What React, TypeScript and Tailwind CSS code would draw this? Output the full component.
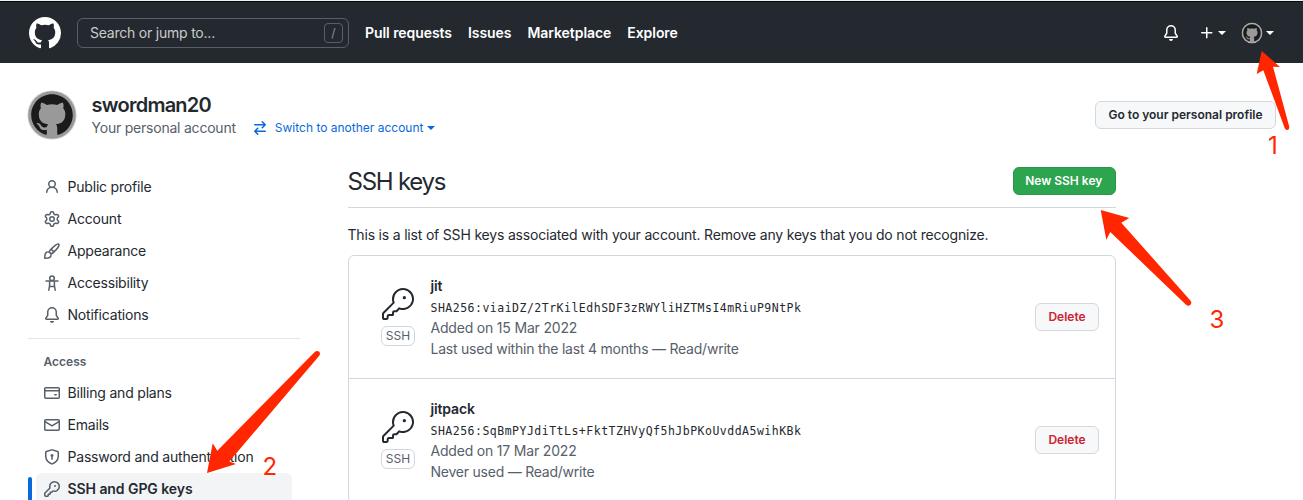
import type { ReactNode } from "react";

const MARK =
  "M8 0C3.58 0 0 3.58 0 8c0 3.54 2.29 6.53 5.47 7.59.4.07.55-.17.55-.38 0-.19-.01-.82-.01-1.49-2.01.37-2.53-.49-2.69-.94-.09-.23-.48-.94-.82-1.13-.28-.15-.68-.52-.01-.53.63-.01 1.08.58 1.23.82.72 1.21 1.87.87 2.33.66.07-.52.28-.87.51-1.07-1.78-.2-3.64-.89-3.64-3.95 0-.87.31-1.59.82-2.15-.08-.2-.36-1.02.08-2.12 0 0 .67-.21 2.2.82.64-.18 1.32-.27 2-.27.68 0 1.36.09 2 .27 1.53-1.04 2.2-.82 2.2-.82.44 1.1.16 1.92.08 2.12.51.56.82 1.27.82 2.15 0 3.07-1.87 3.75-3.65 3.95.29.25.54.73.54 1.48 0 1.07-.01 1.93-.01 2.2 0 .21.15.46.55.38A8.013 8.013 0 0016 8c0-4.42-3.58-8-8-8z";
const PERSON =
  "M10.5 5a2.5 2.5 0 11-5 0 2.5 2.5 0 015 0zm.061 3.073a4 4 0 10-5.123 0 6.004 6.004 0 00-3.431 5.142.75.75 0 001.498.07 4.5 4.5 0 018.99 0 .75.75 0 101.498-.07 6.005 6.005 0 00-3.432-5.142z";
const GEAR =
  "M7.429 1.525a6.593 6.593 0 011.142 0c.036.003.108.036.137.146l.289 1.105c.147.56.55.967.997 1.189.174.086.341.183.501.29.417.278.97.423 1.53.27l1.102-.303c.11-.03.175.016.195.046.219.31.41.641.573.989.014.031.022.11-.059.19l-.815.806c-.411.406-.562.957-.53 1.456a4.588 4.588 0 010 .582c-.032.499.119 1.05.53 1.456l.815.806c.08.08.073.159.059.19a6.494 6.494 0 01-.573.99c-.02.029-.086.074-.195.045l-1.103-.303c-.559-.153-1.112-.008-1.529.27-.16.107-.327.204-.5.29-.449.222-.851.628-.998 1.189l-.289 1.105c-.029.11-.101.143-.137.146a6.613 6.613 0 01-1.142 0c-.036-.003-.108-.037-.137-.146l-.289-1.105c-.147-.56-.55-.967-.997-1.189a4.502 4.502 0 01-.501-.29c-.417-.278-.97-.423-1.53-.27l-1.102.303c-.11.03-.175-.016-.195-.046a6.492 6.492 0 01-.573-.989c-.014-.031-.022-.11.059-.19l.815-.806c.411-.406.562-.957.53-1.456a4.587 4.587 0 010-.582c.032-.499-.119-1.05-.53-1.456l-.815-.806c-.08-.08-.073-.159-.059-.19a6.44 6.44 0 01.573-.99c.02-.029.086-.075.195-.045l1.103.303c.559.153 1.112.008 1.529-.27.16-.107.327-.204.5-.29.449-.222.851-.628.998-1.189l.289-1.105c.029-.11.101-.143.137-.146zM8 0c-.236 0-.47.01-.701.03-.743.065-1.29.615-1.458 1.261l-.29 1.106c-.017.066-.078.158-.211.224a5.994 5.994 0 00-.668.386c-.123.082-.233.09-.3.071L3.27 2.776c-.644-.177-1.392.02-1.82.63a7.977 7.977 0 00-.704 1.217c-.315.675-.111 1.422.363 1.891l.815.806c.05.048.098.147.088.294a6.084 6.084 0 000 .772c.01.147-.038.246-.088.294l-.815.806c-.474.469-.678 1.216-.363 1.891.2.428.436.835.704 1.218.428.609 1.176.806 1.82.63l1.103-.303c.066-.019.176-.011.299.071.213.143.436.272.668.386.133.066.194.158.212.224l.289 1.106c.169.646.715 1.196 1.458 1.26a8.094 8.094 0 001.402 0c.743-.064 1.29-.614 1.458-1.26l.29-1.106c.017-.066.078-.158.211-.224a5.98 5.98 0 00.668-.386c.123-.082.233-.09.3-.071l1.102.302c.644.177 1.392-.02 1.82-.63.268-.382.505-.789.704-1.217.315-.675.111-1.422-.364-1.891l-.814-.806c-.05-.048-.098-.147-.088-.294a6.1 6.1 0 000-.772c-.01-.147.039-.246.088-.294l.814-.806c.475-.469.679-1.216.364-1.891a7.992 7.992 0 00-.704-1.218c-.428-.609-1.176-.806-1.82-.63l-1.103.303c-.066.019-.176.011-.299-.071a5.991 5.991 0 00-.668-.386c-.133-.066-.194-.158-.212-.224L10.16 1.29C9.99.645 9.444.095 8.701.031A8.094 8.094 0 008 0zm1.5 8a1.5 1.5 0 11-3 0 1.5 1.5 0 013 0zM11 8a3 3 0 11-6 0 3 3 0 016 0z";
const BRUSH =
  "M11.134 1.535C9.722 2.562 8.16 4.057 6.889 5.312 5.8 6.387 5.041 7.401 4.575 8.294a3.745 3.745 0 00-3.227 1.054c-.43.431-.69 1.066-.86 1.657a11.982 11.982 0 00-.358 1.914A21.263 21.263 0 000 15.203v.054l.75-.007-.007.75h.054a14.404 14.404 0 00.654-.012 21.243 21.243 0 001.63-.118c.62-.07 1.3-.18 1.914-.357.592-.17 1.226-.43 1.657-.861a3.745 3.745 0 001.055-3.217c.908-.461 1.942-1.216 3.04-2.3 1.279-1.262 2.764-2.825 3.775-4.249.501-.706.923-1.428 1.125-2.096.2-.659.235-1.469-.368-2.07-.606-.607-1.42-.55-2.069-.34-.66.213-1.376.646-2.076 1.155zm-3.95 8.48a3.76 3.76 0 00-1.19-1.192 9.758 9.758 0 011.161-1.607l1.658 1.658a9.853 9.853 0 01-1.63 1.142zM.742 16l.007-.75-.75.008A.75.75 0 00.743 16zM12.016 2.749c-1.224.89-2.605 2.189-3.822 3.384l1.718 1.718c1.21-1.205 2.51-2.597 3.387-3.833.47-.662.78-1.227.912-1.662.134-.444.032-.551.009-.575h-.001V1.78c-.014-.014-.112-.113-.548.027-.432.14-.995.462-1.655.942zM1.62 13.089a19.56 19.56 0 00-.104 1.395 19.55 19.55 0 001.396-.104 10.528 10.528 0 001.668-.309c.526-.151.856-.325 1.011-.48a2.25 2.25 0 00-3.182-3.182c-.155.155-.329.485-.48 1.01a10.515 10.515 0 00-.309 1.67z";
const BELL =
  "M8 16a2 2 0 001.985-1.75c.017-.137-.097-.25-.235-.25h-3.5c-.138 0-.252.113-.235.25A2 2 0 008 16zM8 1.5A3.5 3.5 0 004.5 5v2.947c0 .346-.102.683-.294.97l-1.703 2.556a.018.018 0 00-.003.01l.001.006c0 .002.002.004.004.006a.017.017 0 00.006.004l.007.001h10.964l.007-.001a.016.016 0 00.006-.004.016.016 0 00.004-.006l.001-.007a.017.017 0 00-.003-.01l-1.703-2.554a1.75 1.75 0 01-.294-.97V5A3.5 3.5 0 008 1.5zM3 5a5 5 0 0110 0v2.947c0 .05.015.098.042.139l1.703 2.555A1.518 1.518 0 0113.482 13H2.518a1.518 1.518 0 01-1.263-2.36l1.703-2.554A.25.25 0 003 7.947V5z";
const CARD =
  "M10.75 9a.75.75 0 000 1.5h1.5a.75.75 0 000-1.5h-1.5zM0 3.75C0 2.784.784 2 1.75 2h12.5c.966 0 1.75.784 1.75 1.75v8.5A1.75 1.75 0 0114.25 14H1.75A1.75 1.75 0 010 12.25v-8.5zm14.5 0V5h-13V3.75a.25.25 0 01.25-.25h12.5a.25.25 0 01.25.25zm0 2.75h-13v5.75c0 .138.112.25.25.25h12.5a.25.25 0 00.25-.25V6.5z";
const MAIL =
  "M1.75 2A1.75 1.75 0 000 3.75v.736a.75.75 0 000 .027v7.737C0 13.216.784 14 1.75 14h12.5A1.75 1.75 0 0016 12.25v-8.5A1.75 1.75 0 0014.25 2H1.75zM14.5 4.07v-.32a.25.25 0 00-.25-.25H1.75a.25.25 0 00-.25.25v.32L8 7.88l6.5-3.81zm-13 1.74v6.441c0 .138.112.25.25.25h12.5a.25.25 0 00.25-.25V5.809L8.38 9.397a.75.75 0 01-.76 0L1.5 5.809z";
const SHIELD =
  "M8.533.133a1.75 1.75 0 00-1.066 0l-5.25 1.68A1.75 1.75 0 001 3.48V7c0 1.566.32 3.182 1.303 4.682.983 1.498 2.585 2.813 5.032 3.855a1.7 1.7 0 001.33 0c2.447-1.042 4.049-2.357 5.032-3.855C14.68 10.182 15 8.566 15 7V3.48a1.75 1.75 0 00-1.217-1.667L8.533.133zm-.61 1.429a.25.25 0 01.153 0l5.25 1.68a.25.25 0 01.174.238V7c0 1.358-.275 2.666-1.057 3.86-.784 1.194-2.121 2.34-4.366 3.297a.2.2 0 01-.154 0c-2.245-.956-3.582-2.104-4.366-3.298C2.775 9.666 2.5 8.36 2.5 7V3.48a.25.25 0 01.174-.237l5.25-1.68zM9.5 6.5a1.5 1.5 0 01-.75 1.3v2.45a.75.75 0 01-1.5 0V7.8A1.5 1.5 0 119.5 6.5z";
const KEY =
  "M6.5 5.5a4 4 0 112.731 3.795.75.75 0 00-.768.18L7.44 10.5H6.25a.75.75 0 00-.75.75v1.19l-.06.06H4.25a.75.75 0 00-.75.75v1.19l-.06.06H1.75a.25.25 0 01-.25-.25v-1.69l5.024-5.023a.75.75 0 00.181-.768A3.995 3.995 0 016.5 5.5zm4-5.5a5.5 5.5 0 00-5.348 6.788L.22 11.72a.75.75 0 00-.22.53v2C0 15.216.784 16 1.75 16h2a.75.75 0 00.53-.22l.5-.5a.75.75 0 00.22-.53V14h.75a.75.75 0 00.53-.22l.5-.5a.75.75 0 00.22-.53V12h.75a.75.75 0 00.53-.22l.932-.932A5.5 5.5 0 1010.5 0zm.5 6a1 1 0 100-2 1 1 0 000 2z";
const BIG_KEY =
  "M16.75 8.5a1.25 1.25 0 100-2.5 1.25 1.25 0 000 2.5zM15.75 0a8.25 8.25 0 00-7.851 10.79L.513 18.178A1.75 1.75 0 000 19.414v2.836C0 23.217.784 24 1.75 24h1.5A1.75 1.75 0 005 22.25v-1a.25.25 0 01.25-.25h2.735a.75.75 0 00.545-.22l.214-.213A.875.875 0 009 19.948V18.5a.25.25 0 01.25-.25h1.086c.464 0 .91-.184 1.237-.513l1.636-1.636A8.25 8.25 0 1015.75 0zM9 8.25a6.75 6.75 0 114.288 6.287.75.75 0 00-.804.168l-1.971 1.972a.25.25 0 01-.177.073H9.25A1.75 1.75 0 007.5 18.5v1H5.25a1.75 1.75 0 00-1.75 1.75v1a.25.25 0 01-.25.25h-1.5a.25.25 0 01-.25-.25v-2.836a.25.25 0 01.073-.177l7.722-7.721a.75.75 0 00.168-.804A6.73 6.73 0 019 8.25z";
const SWITCH =
  "M5.22 14.78a.75.75 0 001.06-1.06L4.56 12h8.69a.75.75 0 000-1.5H4.56l1.72-1.72a.75.75 0 00-1.06-1.06l-3 3a.75.75 0 000 1.06l3 3zm5.56-6.5a.75.75 0 11-1.06-1.06l1.72-1.72H2.75a.75.75 0 010-1.5h8.69L9.72 2.28a.75.75 0 011.06-1.06l3 3a.75.75 0 010 1.06l-3 3z";
const PLUS =
  "M7.75 2a.75.75 0 01.75.75V7h4.25a.75.75 0 110 1.5H8.5v4.25a.75.75 0 11-1.5 0V8.5H2.75a.75.75 0 010-1.5H7V2.75A.75.75 0 017.75 2z";

function Icon({ d, className = "size-4" }: { d: string; className?: string }) {
  return (
    <svg viewBox="0 0 16 16" fill="currentColor" fillRule="evenodd" className={`shrink-0 ${className}`}>
      <path d={d} />
    </svg>
  );
}

function AccessibilityIcon() {
  return (
    <svg viewBox="0 0 16 16" fill="none" stroke="currentColor" strokeWidth="1.5" strokeLinecap="round" strokeLinejoin="round" className="size-4 shrink-0">
      <circle cx="8" cy="3.2" r="2.3" />
      <path d="M2 6.1h12M5.6 6.4v4.2L4.8 15.2M10.4 6.4v4.2l.8 4.6M6 11.5h4" />
    </svg>
  );
}

function Caret({ className = "" }: { className?: string }) {
  return (
    <svg viewBox="0 0 8 4" fill="currentColor" className={`h-1 w-2 shrink-0 ${className}`}>
      <path d="M0 0h8L4 4z" />
    </svg>
  );
}

function Avatar({ className }: { className: string }) {
  return (
    <svg viewBox="0 0 48 48" className={`shrink-0 overflow-visible ${className}`}>
      <circle cx="24" cy="24" r="24.6" fill="#d0d1d3" />
      <circle cx="24" cy="24" r="23.7" fill="#999" />
      <g transform="translate(3.2 3.2) scale(2.6)">
        <path d={MARK} fill="#1b1b1b" />
      </g>
    </svg>
  );
}

function NavItem({ icon, label }: { icon: ReactNode; label: string }) {
  return (
    <a className="flex h-8 items-center gap-[7.5px] pl-4">
      <span className="text-[#57606a]">{icon}</span>
      <span className="whitespace-nowrap text-[14px] leading-5 tracking-[-0.2px]">{label}</span>
    </a>
  );
}

function KeyRow({ name, hash, added, used }: { name: string; hash: string; added: string; used: string }) {
  return (
    <li className="flex h-[123px] items-center border-b border-[#d0d7de] pr-4 pl-8">
      <div className="mb-px flex w-[34px] flex-col items-center">
        <svg viewBox="0 0 24 24" fill="currentColor" fillRule="evenodd" className="size-8">
          <path d={BIG_KEY} />
        </svg>
        <span className="mt-[6px] flex h-5 w-[34px] items-center justify-center rounded-md border border-[#d0d7de] text-[12px] text-[#57606a]">
          SSH
        </span>
      </div>
      <div className="ml-[15.5px] flex-1 text-[14px] leading-[21px] text-[#57606a]">
        <div className="font-semibold tracking-[-0.15px] text-[#24292f]">{name}</div>
        <div className="h-[21px] pt-0.5 font-['DejaVu_Sans_Mono',monospace] text-[11.5px] leading-[21px] tracking-[0.495px] text-[#24292f]">
          {hash}
        </div>
        <div className="tracking-[-0.19px]">{added}</div>
        <div className="tracking-[-0.23px]">{used}</div>
      </div>
      <button className="h-7 w-16 rounded-md border border-[#d5d8db] bg-[#f6f8fa] text-[12px] font-semibold text-[#cf222e]">
        Delete
      </button>
    </li>
  );
}

function Annotations() {
  return (
    <div className="pointer-events-none absolute inset-0 text-[24px] leading-6 text-[#ff2600]">
      <svg viewBox="0 0 1303 500" fill="#ff2600" className="h-[500px] w-[1303px]">
        <path d="M1261.7 51L1280 67L1273 66.7L1289.2 126.5Q1289.7 129.5 1287.3 130Q1285.6 130.3 1284.7 128L1263.3 70.3L1256.7 74Z" />
        <path d="M207 473L212.7 443.3L217.3 450.7L315 351.8Q317.2 350 319.3 351.8Q320.8 353.8 319 356L229.3 461.5L236 464Z" />
        <path d="M1100.7 210L1129.3 218L1121.3 222.7L1190.6 300.8Q1192 303 1190.5 304.8Q1188.5 306.6 1186.3 305L1110.3 232L1106.3 239.7Z" />
      </svg>
      <span className="absolute top-[134px] left-[1268px]">1</span>
      <span className="absolute top-[455px] left-[262.5px]">2</span>
      <span className="absolute top-[308px] left-[1209.5px]">3</span>
    </div>
  );
}

export default function App() {
  return (
    <div className="relative h-[500px] w-[1303px] overflow-hidden bg-white font-[Inter,sans-serif] text-[14px] text-[#24292f]">
      <div className="h-px bg-[#e9f3ec]" />
      <header className="flex h-[62px] items-center border-t border-[#06090c] bg-[#24292f] pr-[29px] pl-[29px] text-white">
        <Icon d={MARK} className="size-8" />
        <div className="ml-4 flex h-[30px] w-[272px] items-center justify-between rounded-md border border-[#57606a] pr-[5px] pl-3">
          <span className="tracking-[-0.22px] text-[#c9cbcd]">Search or jump to...</span>
          <span className="flex h-5 w-[19px] items-center justify-center rounded border border-[#57606a] text-[12px] text-[#8b9096]">/</span>
        </div>
        <nav className="ml-4 flex gap-4 font-semibold tracking-[-0.06px] whitespace-nowrap">
          <a>Pull requests</a>
          <a>Issues</a>
          <a>Marketplace</a>
          <a>Explore</a>
        </nav>
        <div className="ml-auto flex items-center">
          <Icon d={BELL} />
          <Icon d={PLUS} className="ml-5 size-4" />
          <Caret className="ml-[3px]" />
          <Avatar className="ml-4 size-5" />
          <Caret className="ml-1" />
        </div>
      </header>

      <section className="flex items-start pt-7 pr-[27px] pl-7">
        <Avatar className="size-12" />
        <div className="ml-[15.5px]">
          <h1 className="text-[20px] leading-7 font-semibold tracking-[-0.75px]">swordman20</h1>
          <div className="flex items-center leading-[18px] whitespace-nowrap">
            <span className="tracking-[-0.22px] text-[#57606a]">Your personal account</span>
            <a className="ml-4 flex items-center text-[12px] text-[#0969da]">
              <Icon d={SWITCH} />
              <span className="ml-[7px]">Switch to another account</span>
              <Caret className="ml-1" />
            </a>
          </div>
        </div>
        <button className="mt-[10px] ml-auto h-7 w-[181px] rounded-md border border-[#d5d8db] bg-[#f6f8fa] text-[12px] font-semibold">
          Go to your personal profile
        </button>
      </section>

      <div className="flex pl-7">
        <aside className="w-[272px] pt-8">
          <NavItem icon={<Icon d={PERSON} />} label="Public profile" />
          <NavItem icon={<Icon d={GEAR} />} label="Account" />
          <NavItem icon={<Icon d={BRUSH} />} label="Appearance" />
          <NavItem icon={<AccessibilityIcon />} label="Accessibility" />
          <NavItem icon={<Icon d={BELL} />} label="Notifications" />
          <hr className="mt-[7px] border-[#e3e6e9]" />
          <h3 className="mt-[14px] mb-[6px] pl-[15.5px] text-[12px] leading-[18px] font-semibold text-[#57606a]">Access</h3>
          <NavItem icon={<Icon d={CARD} />} label="Billing and plans" />
          <NavItem icon={<Icon d={MAIL} />} label="Emails" />
          <NavItem icon={<Icon d={SHIELD} />} label="Password and authentication" />
          <a className="flex">
            <span className="mt-1 h-6 w-1 rounded-md bg-[#0969da]" />
            <span className="ml-1 flex h-8 w-64 items-center gap-[7.5px] rounded-md bg-[#f3f4f6] pl-2 font-semibold tracking-[-0.07px]">
              <span className="text-[#57606a]">
                <Icon d={KEY} />
              </span>
              <span className="leading-5">SSH and GPG keys</span>
            </span>
          </a>
        </aside>

        <main className="ml-12 w-[768px] shrink-0 pt-7">
          <div className="flex h-[41px] items-start justify-between border-b border-[#d0d7de]">
            <h2 className="-ml-[0.5px] text-[24px] leading-[30px] tracking-[-1.25px]">SSH keys</h2>
            <button className="h-7 w-[103px] rounded-md border border-[#2a964a] bg-[#2da44e] pr-[1.5px] text-[12px] font-semibold text-white">
              New SSH key
            </button>
          </div>
          <p className="mt-4 -ml-[0.5px] leading-[21px] tracking-[-0.19px]">
            This is a list of SSH keys associated with your account. Remove any keys that you do not recognize.
          </p>
          <ul className="mt-[10px] rounded-md border border-[#d0d7de]">
            <KeyRow
              name="jit"
              hash="SHA256:viaiDZ/2TrKilEdhSDF3zRWYliHZTMsI4mRiuP9NtPk"
              added="Added on 15 Mar 2022"
              used="Last used within the last 4 months — Read/write"
            />
            <KeyRow
              name="jitpack"
              hash="SHA256:SqBmPYJdiTtLs+FktTZHVyQf5hJbPKoUvddA5wihKBk"
              added="Added on 17 Mar 2022"
              used="Never used — Read/write"
            />
          </ul>
        </main>
      </div>
      <Annotations />
    </div>
  );
}
